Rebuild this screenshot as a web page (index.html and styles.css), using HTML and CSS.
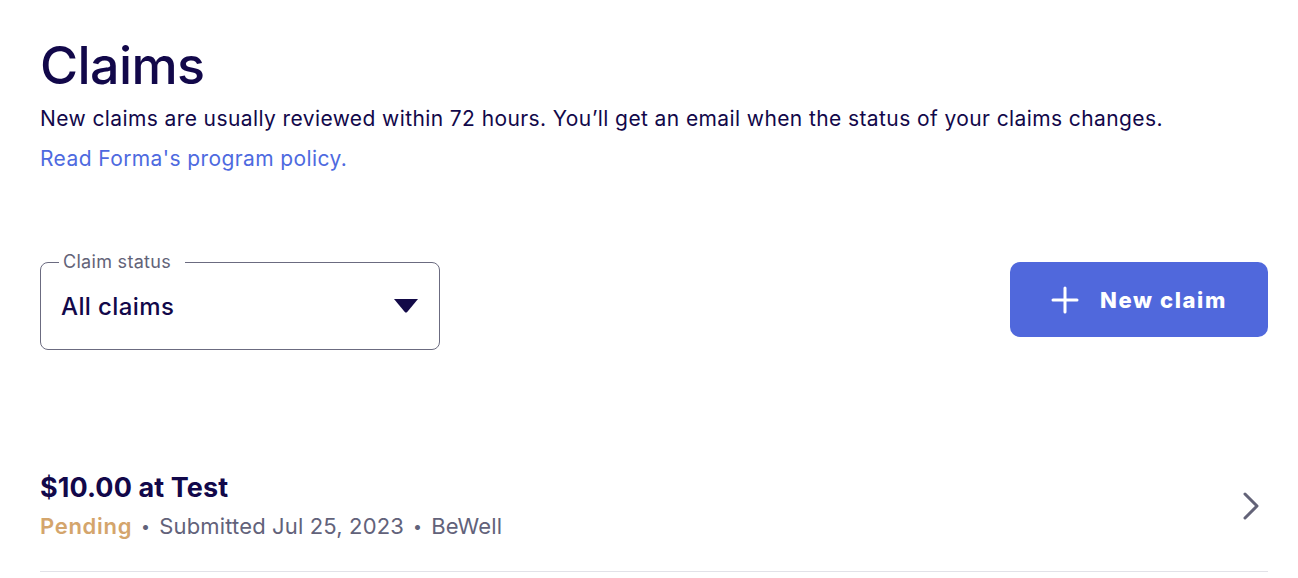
FILE: index.html
```html
<!DOCTYPE html>
<html lang="en">
<head>
<meta charset="utf-8">
<title>Claims</title>
<link rel="stylesheet" href="styles.css">
</head>
<body>
<main class="page">
  <header class="intro">
    <h1 class="title">Claims</h1>
    <p class="lead">New claims are usually reviewed within 72 hours. You’ll get an email when the status of your claims changes.</p>
    <a class="policy" href="#">Read Forma's program policy.</a>
  </header>

  <section class="toolbar">
    <fieldset class="select">
      <legend class="select-label">Claim status</legend>
      <div class="select-body">
        <span class="select-value">All claims</span>
        <svg class="select-caret" width="26" height="16" viewBox="0 0 26 16"><path d="M1 1 H25 L14.2 14 Q13 15.2 11.8 14 Z" fill="#130a48"/></svg>
      </div>
    </fieldset>
    <button class="new-btn" type="button">
      <svg class="plus" width="28" height="28" viewBox="0 0 28 28"><path d="M14 2 V26 M2 14 H26" stroke="#fff" stroke-width="3" stroke-linecap="round"/></svg>
      <span>New claim</span>
    </button>
  </section>

  <a class="claim" href="#">
    <div class="claim-info">
      <div class="claim-title">$10.00 at Test</div>
      <div class="claim-meta"><span class="status">Pending</span><span class="dot">•</span><span>Submitted Jul 25, 2023</span><span class="dot">•</span><span>BeWell</span></div>
    </div>
    <svg class="chevron" width="18" height="30" viewBox="0 0 18 30"><path d="M3 3 L15 15 L3 27" fill="none" stroke="#636378" stroke-width="3" stroke-linecap="round" stroke-linejoin="round"/></svg>
  </a>
</main>
</body>
</html>
```

FILE: styles.css
```css
* { box-sizing: border-box; }
html, body { margin: 0; padding: 0; background: #fff; }
body {
  font-family: "Inter", "Open Sans", "Liberation Sans", sans-serif;
  color: #12084a;
}
.page {
  padding: 38px 30px 0 40px;
  display: flex;
  flex-direction: column;
}
.intro { display: flex; flex-direction: column; align-items: flex-start; }
.title {
  margin: 0;
  font-size: 52px;
  font-weight: 500;
  line-height: 56px;
  letter-spacing: -0.6px;
}
.lead {
  margin: 12px 0 0;
  font-size: 21px;
  line-height: 26px;
  letter-spacing: 0.4px;
}
.policy {
  margin-top: 14px;
  font-size: 21px;
  line-height: 26px;
  color: #4e6ae0;
  text-decoration: none;
  letter-spacing: 0.4px;
}
.toolbar {
  margin-top: 90px;
  display: flex;
  justify-content: space-between;
  align-items: flex-start;
}
.select {
  width: 400px;
  margin: -9px 0 0;
  padding: 0 20px 0 20px;
  border: 1px solid #6b6b80;
  border-radius: 8px;
}
.select-label {
  padding: 0 14px 0 4px;
  margin-left: -2px;
  font-size: 18px;
  line-height: 18px;
  color: #636378;
  letter-spacing: 0.3px;
}
.select-body {
  height: 78px;
  padding-bottom: 8px;
  display: flex;
  align-items: center;
  justify-content: space-between;
}
.select-value {
  font-size: 24px;
  font-weight: 500;
  letter-spacing: 0.4px;
}
.select-caret { display: block; }
.new-btn {
  width: 258px;
  height: 75px;
  border: 0;
  border-radius: 10px;
  background: #5068dc;
  color: #fff;
  font-family: inherit;
  font-size: 22px;
  font-weight: 800;
  letter-spacing: 1.6px;
  display: flex;
  align-items: center;
  justify-content: center;
  gap: 21px;
  cursor: pointer;
}
.plus { display: block; }
.claim {
  margin-top: 121px;
  padding-bottom: 31px;
  border-bottom: 1px solid #e2e2e8;
  display: flex;
  align-items: center;
  justify-content: space-between;
  text-decoration: none;
  color: inherit;
}
.claim-title {
  font-size: 27px;
  font-weight: 700;
  line-height: 34px;
  letter-spacing: 0.1px;
}
.claim-meta {
  margin-top: 7px;
  font-size: 22px;
  line-height: 28px;
  color: #62627a;
  display: flex;
  gap: 9px;
  letter-spacing: 0.15px;
}
.status { color: #d4a56c; font-weight: 600; letter-spacing: 0.7px; }
.dot { font-size: 16px; }
.chevron { margin-right: 8px; display: block; }
```
